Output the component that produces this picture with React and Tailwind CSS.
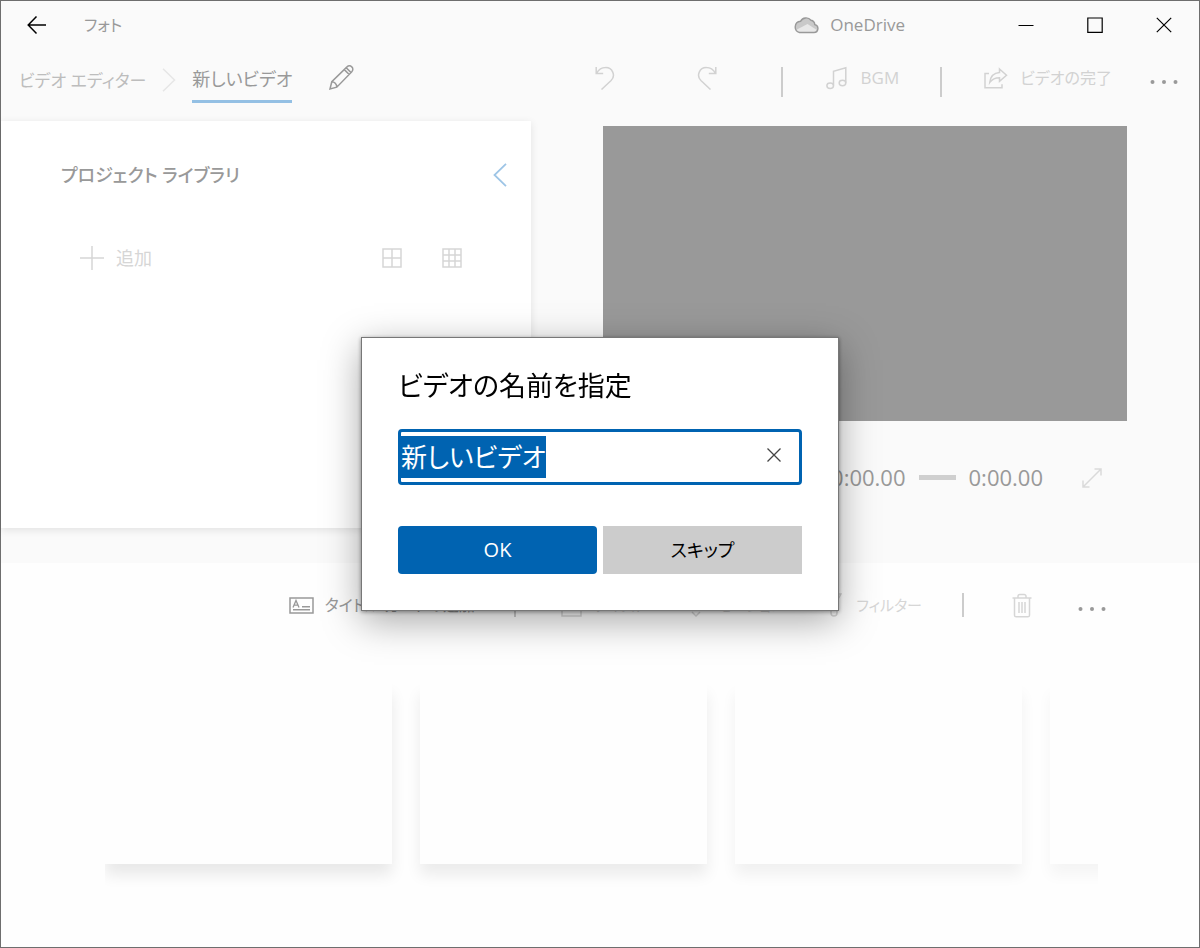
import { useEffect, useRef, useState } from "react";

function Icon({ className, viewBox, children }) {
  return (
    <svg
      className={className}
      viewBox={viewBox}
      fill="none"
      stroke="currentColor"
      strokeWidth="1.5"
      aria-hidden="true"
    >
      {children}
    </svg>
  );
}

function Dots() {
  return (
    <svg className="h-4 w-7" viewBox="0 0 28 16" fill="currentColor" aria-hidden="true">
      <circle cx="2.5" cy="8" r="2" />
      <circle cx="14" cy="8" r="2" />
      <circle cx="25.5" cy="8" r="2" />
    </svg>
  );
}

function TitleBar() {
  return (
    <div className="flex h-12 items-center pr-px text-black">
      <button aria-label="戻る" className="flex h-full w-[72px] items-center justify-center">
        <Icon className="h-5 w-5" viewBox="0 0 20 20">
          <path d="M19 10H1.5M9.5 1.5L1.2 10l8.3 8.5" />
        </Icon>
      </button>
      <span className="ml-[11px] text-[16px] text-[#999999]">フォト</span>
      <div className="ml-auto mr-[86px] flex items-center gap-[11px] text-[#999999]">
        <svg className="h-[18px] w-[25px]" viewBox="0 0 25 18" aria-hidden="true">
          <path
            d="M5.500 16.500H20a4 4 0 0 0 .8-7.900A4.800 4.800 0 0 0 17 4.300 6.300 6.300 0 0 0 6.500 5.300 5.700 5.700 0 0 0 5.500 16.500Z"
            fill="#c9c9c9"
          />
          <path d="M2 14L13.500 8l9 5.800a3.500 3.500 0 0 1-2.500 2.700H5.500A5 5 0 0 1 2 14Z" fill="#e8e8e8" />
          <path
            d="M5.500 16.500H20a4 4 0 0 0 .8-7.900A4.800 4.800 0 0 0 17 4.300 6.300 6.300 0 0 0 6.500 5.300 5.700 5.700 0 0 0 5.500 16.500Z"
            fill="none"
            stroke="#999999"
            strokeWidth="1.4"
          />
        </svg>
        <span className="text-[17px]">OneDrive</span>
      </div>
      <button aria-label="最小化" className="flex h-full w-[69px] items-center justify-center">
        <Icon className="h-4 w-4" viewBox="0 0 16 16">
          <path strokeWidth="1" d="M.5 8.5h15" />
        </Icon>
      </button>
      <button aria-label="最大化" className="flex h-full w-[69px] items-center justify-center">
        <Icon className="h-4 w-4" viewBox="0 0 16 16">
          <path strokeWidth="1.2" d="M.8 1h14.4v14.4H.8z" />
        </Icon>
      </button>
      <button aria-label="閉じる" className="flex h-full w-[69px] items-center justify-center">
        <Icon className="h-4 w-4" viewBox="0 0 16 16">
          <path strokeWidth="1.2" d="M.8.8l14.4 14.4M15.2.8L.8 15.2" />
        </Icon>
      </button>
    </div>
  );
}

function EditorBar() {
  return (
    <header className="flex h-[66px] items-center pl-[18px] pr-[21px] text-[#d2d2d2]">
      <nav className="flex items-center">
        <a href="#editor" className="pb-0.5 text-[17px] text-[#bdbdbd]">
          ビデオ エディター
        </a>
        <span className="mx-4 pb-1">
          <Icon className="h-6 w-[14px] text-[#e6e6e6]" viewBox="0 0 14 24">
            <path d="M1 .8L12.5 12 1 23.2" />
          </Icon>
        </span>
        <a
          href="#video"
          aria-current="page"
          className="border-b-[3px] border-[#94c0e4] pb-2 pt-1 text-[18px] leading-[26px] text-[#999999]"
        >
          新しいビデオ
        </a>
      </nav>
      <button aria-label="名前の変更" className="ml-9 pb-2 text-[#999999]">
        <Icon className="h-[26px] w-[26px]" viewBox="0 0 26 26">
          <path d="M2 24l1.8-7.3L19 1.9a3.3 3.3 0 0 1 4.8 0 3.3 3.3 0 0 1 0 4.8L8.8 22.2zM3.8 16.7c2.6 0 5 2.2 5 5.5M16.3 4.6l4.9 4.9M18.2 2.8l4.9 4.8" />
        </Icon>
      </button>
      <div className="ml-auto flex items-center">
        <button aria-label="元に戻す" className="pb-2">
          <Icon className="h-6 w-5" viewBox="0 0 20 24">
            <path d="M1.2 1v6.6h7M1.5 7.3C4 3 7 1.5 10.5 1.5a7.6 7.6 0 0 1 5.6 13L6.5 23.5" />
          </Icon>
        </button>
        <button aria-label="やり直し" className="ml-[82px] pb-2">
          <Icon className="h-6 w-5" viewBox="0 0 20 24">
            <path d="M18.8 1v6.6h-7M18.5 7.3C16 3 13 1.5 9.5 1.5a7.6 7.6 0 0 0-5.6 13l9.6 9" />
          </Icon>
        </button>
        <span className="ml-16 h-[30px] w-0.5 bg-[#cccccc]" />
        <button className="ml-[43px] flex items-center gap-[14px] pb-2 text-[17px]">
          <Icon className="h-6 w-[21px]" viewBox="0 0 21 24">
            <path d="M7.5 19.5V5.2L19.8 1.8v15" />
            <ellipse cx="4.2" cy="19.8" rx="3.3" ry="2.7" />
            <ellipse cx="16.5" cy="17" rx="3.3" ry="2.7" />
          </Icon>
          BGM
        </button>
        <span className="ml-[41px] h-[30px] w-0.5 bg-[#cccccc]" />
        <button className="ml-[42px] flex items-center gap-3 pb-2 text-[16px]">
          <Icon className="h-[22px] w-6" viewBox="0 0 24 22">
            <path d="M5 6.500H1v14.200h17v-3.500M15.500 2l7 6.200-7 6.200v-3.700c-4 0-7 1-9.700 4.700C6.500 9.500 10 6 15.500 5.600z" />
          </Icon>
          ビデオの完了
        </button>
        <button aria-label="その他" className="ml-[38px] text-[#999999]">
          <Dots />
        </button>
      </div>
    </header>
  );
}

function Library() {
  return (
    <section className="min-h-[407px] w-[530px] shrink bg-white pr-6 pt-[30px] shadow-[0_2px_8px_rgba(0,0,0,0.1)]">
      <div className="flex h-12 items-center justify-between pl-[60px]">
        <h2 className="text-[18px] font-medium text-[#999999]">プロジェクト ライブラリ</h2>
        <button aria-label="折りたたむ" className="text-[#9ec5e6]">
          <Icon className="h-6 w-[14px]" viewBox="0 0 14 24">
            <path strokeWidth="1.8" d="M13 .8L1.500 12 13 23.2" />
          </Icon>
        </button>
      </div>
      <div className="mt-[35px] flex h-12 items-center pl-[79px] pr-[45px] text-[#d6d6d6]">
        <button className="flex items-center gap-3 text-[18px]">
          <Icon className="h-6 w-6" viewBox="0 0 24 24">
            <path d="M12 0v24M0 12h24" />
          </Icon>
          追加
        </button>
        <button aria-label="中サイズ" className="ml-auto">
          <Icon className="h-5 w-5" viewBox="0 0 20 20">
            <path d="M1 1h18v18H1zM10 1v18M1 10h18" />
          </Icon>
        </button>
        <button aria-label="小サイズ" className="ml-10">
          <Icon className="h-5 w-5" viewBox="0 0 20 20">
            <path d="M1 1h18v18H1zM7 1v18M13 1v18M1 7h18M1 13h18" />
          </Icon>
        </button>
      </div>
    </section>
  );
}

function Preview() {
  return (
    <section className="flex flex-1 flex-col px-[72px] pt-[5px]">
      <div className="aspect-video w-full bg-[#999999]" />
      <div className="mt-[43px] flex h-7 items-center justify-end pr-[25px] text-[22px] text-[#999999]">
        <span>0:00.00</span>
        <input
          type="range"
          aria-label="再生位置"
          disabled
          className="mx-[13px] h-[5px] w-[37px] appearance-none bg-[#cfcfcf] [&::-webkit-slider-thumb]:appearance-none"
        />
        <span>0:00.00</span>
        <button aria-label="全画面表示" className="ml-[39px] text-[#dadada]">
          <Icon className="h-5 w-5" viewBox="0 0 20 20">
            <path d="M1 12.500V19h6.500M12.500 1H19v6.500M1 19L19 1" />
          </Icon>
        </button>
      </div>
    </section>
  );
}

const cardShadows = [
  "shadow-[0_11px_14px_rgba(0,0,0,0.085)]",
  "shadow-[0_11px_14px_rgba(0,0,0,0.075)]",
  "shadow-[0_11px_14px_rgba(0,0,0,0.055)]",
  "shadow-[0_11px_14px_rgba(0,0,0,0.04)]",
];

function Storyboard() {
  return (
    <section className="flex-1 bg-[#fefefe]">
      <div className="flex h-[84px] items-center justify-end pr-[93px] text-[15px] text-[#d6d6d6]">
        <button className="flex items-center gap-[11px] text-[16px] text-[#999999]">
          <Icon className="h-[17px] w-[25px]" viewBox="0 0 25 17">
            <path d="M1 1h23v15H1zM4 12.800h17M13 9.800h8" />
            <path strokeWidth="1.300" d="M4 10.500L7 3.500l3 7M5 8.200h4" />
          </Icon>
          タイトル カードの追加
        </button>
        <span className="ml-[39px] h-[24px] w-0.5 bg-[#cccccc]" />
        <button className="ml-[45px] flex items-center gap-3">
          <Icon className="h-6 w-[21px]" viewBox="0 0 21 24">
            <path d="M1 1h19v22H1zM6 7h9M10.500 7v10" />
          </Icon>
          テキスト
        </button>
        <button className="ml-10 flex items-center gap-[11px]">
          <Icon className="h-6 w-[20px]" viewBox="0 0 20 24">
            <path d="M6 5l4-4 4 4M6 19l4 4 4-4" />
            <circle cx="10" cy="12" r="4" />
          </Icon>
          モーション
        </button>
        <button className="ml-10 flex items-center gap-[14px]">
          <Icon className="h-6 w-[18px]" viewBox="0 0 18 24">
            <path d="M1 1h16l-4 7v12a3 3 0 0 1-6 0V8z" />
          </Icon>
          フィルター
        </button>
        <span className="ml-10 h-[24px] w-0.5 bg-[#cccccc]" />
        <button aria-label="削除" className="ml-12">
          <Icon className="h-[25px] w-5" viewBox="0 0 20 25">
            <path d="M.5 5h19M6 5V3.200A1.800 1.800 0 0 1 7.800 1.400h4.400A1.800 1.800 0 0 1 14 3.200V5M2.500 5v17.200c0 1 .8 1.600 1.700 1.600h11.600c1 0 1.700-.7 1.700-1.600V5M7 9v11M10 9v11M13 9v11" />
          </Icon>
        </button>
        <button aria-label="その他" className="ml-[46px] pt-2 text-[#999999]">
          <Dots />
        </button>
      </div>
      <div className="ml-[104px] mr-[101px] mt-9 flex gap-7 overflow-hidden pb-8">
        {cardShadows.map((shadow) => (
          <div key={shadow} className={`h-[181px] w-[287px] flex-none bg-[#fefefe] ${shadow}`} />
        ))}
      </div>
    </section>
  );
}

function NameDialog() {
  const field = useRef(null);
  const [name, setName] = useState("新しいビデオ");

  useEffect(() => {
    field.current.focus();
    field.current.select();
  }, []);

  return (
    <div className="fixed inset-0 grid place-items-center">
      <form
        role="dialog"
        aria-labelledby="dialog-title"
        onSubmit={(event) => event.preventDefault()}
        className="w-[478px] border border-[#777777] bg-white px-9 pb-9 pt-[26px] text-black shadow-[0_10px_36px_rgba(0,0,0,0.35),0_1px_4px_rgba(0,0,0,0.4)]"
      >
        <label
          id="dialog-title"
          htmlFor="video-name"
          className="block text-[27px] leading-[44px]"
        >
          ビデオの名前を指定
        </label>
        <div className="mt-[21px] flex h-14 items-center rounded border-[3px] border-[#0063b1]">
          <input
            ref={field}
            id="video-name"
            value={name}
            onChange={(event) => setName(event.target.value)}
            className="min-w-0 flex-1 text-[26px] leading-[42px] outline-none selection:bg-[#0063b1] selection:text-white"
          />
          <button
            type="button"
            aria-label="クリア"
            onClick={() => setName("")}
            className="flex h-full w-[50px] items-center justify-center pb-1 text-[#444444]"
          >
            <Icon className="h-[14px] w-[14px]" viewBox="0 0 14 14">
              <path strokeWidth="1.300" d="M.5.5l13 13M13.500.5l-13 13" />
            </Icon>
          </button>
        </div>
        <div className="mt-[41px] grid grid-cols-2 gap-[6px]">
          <button type="submit" className="h-12 rounded bg-[#0063b1] text-[20px] text-white">
            OK
          </button>
          <button type="button" className="h-12 bg-[#cccccc] text-[18px]">
            スキップ
          </button>
        </div>
      </form>
    </div>
  );
}

export default function App() {
  return (
    <div className="flex min-h-screen flex-col whitespace-nowrap border border-[#6e6e6e] bg-[#fafafa] font-['Open_Sans','Noto_Sans_CJK_JP',sans-serif] [font-feature-settings:'palt']">
      <TitleBar />
      <EditorBar />
      <main className="mt-[6px] flex pb-[35px]">
        <Library />
        <Preview />
      </main>
      <Storyboard />
      <NameDialog />
    </div>
  );
}
